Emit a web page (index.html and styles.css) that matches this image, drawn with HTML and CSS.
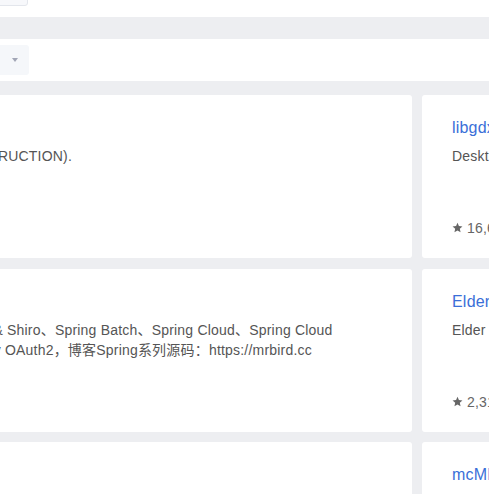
FILE: index.html
```html
<!DOCTYPE html>
<html lang="zh-CN">
<head>
<meta charset="utf-8">
<title>Trending</title>
<link rel="stylesheet" href="styles.css">
</head>
<body>
<div class="page">
  <header class="top">
    <div class="search"></div>
  </header>
  <div class="band"></div>
  <div class="filters">
    <div class="select"><span class="caret"></span></div>
  </div>
  <main class="content">
    <div class="grid">
      <article class="card">
        <a class="title">java-guide</a>
        <p class="desc">A path to learning Java 8 (UNDER CONSTRUCTION).</p>
        <div class="stars"><svg class="star" viewBox="0 0 24 24"><path d="M12 1.8l3.1 7.1 7.7.7-5.8 5.1 1.7 7.6L12 18.3l-6.7 4 1.7-7.6-5.8-5.1 7.7-.7z"/></svg>4,812</div>
      </article>
      <article class="card">
        <a class="title">libgdx</a>
        <p class="desc">Desktop/Android/HTML5/iOS Java game development framework</p>
        <div class="stars"><svg class="star" viewBox="0 0 24 24"><path d="M12 1.8l3.1 7.1 7.7.7-5.8 5.1 1.7 7.6L12 18.3l-6.7 4 1.7-7.6-5.8-5.1 7.7-.7z"/></svg>16,634</div>
      </article>
      <article class="card">
        <a class="title">SpringAll</a>
        <p class="desc">循序渐进，学习Spring Boot、Spring Boot &amp; Shiro、Spring Batch、Spring Cloud、Spring Cloud Alibaba、Spring Security &amp; Spring Security OAuth2，博客Spring系列源码：https://mrbird.cc</p>
        <div class="stars"><svg class="star" viewBox="0 0 24 24"><path d="M12 1.8l3.1 7.1 7.7.7-5.8 5.1 1.7 7.6L12 18.3l-6.7 4 1.7-7.6-5.8-5.1 7.7-.7z"/></svg>6,102</div>
      </article>
      <article class="card">
        <a class="title">Elder</a>
        <p class="desc">Elder driver Xiao Wang</p>
        <div class="stars"><svg class="star" viewBox="0 0 24 24"><path d="M12 1.8l3.1 7.1 7.7.7-5.8 5.1 1.7 7.6L12 18.3l-6.7 4 1.7-7.6-5.8-5.1 7.7-.7z"/></svg>2,318</div>
      </article>
      <article class="card">
        <a class="title">halo</a>
        <p class="desc">A modern blogging system.</p>
        <div class="stars"><svg class="star" viewBox="0 0 24 24"><path d="M12 1.8l3.1 7.1 7.7.7-5.8 5.1 1.7 7.6L12 18.3l-6.7 4 1.7-7.6-5.8-5.1 7.7-.7z"/></svg>9,544</div>
      </article>
      <article class="card">
        <a class="title">mcMMO</a>
        <p class="desc">The #1 RPG Mod for Minecraft</p>
        <div class="stars"><svg class="star" viewBox="0 0 24 24"><path d="M12 1.8l3.1 7.1 7.7.7-5.8 5.1 1.7 7.6L12 18.3l-6.7 4 1.7-7.6-5.8-5.1 7.7-.7z"/></svg>412</div>
      </article>
    </div>
  </main>
</div>
</body>
</html>
```

FILE: styles.css
```css
html, body {
  margin: 0;
  padding: 0;
  overflow: hidden;
  background: #ffffff;
}

body {
  font-family: "Liberation Sans", Arial, "Noto Sans CJK SC", sans-serif;
  font-size: 14px;
  color: #555;
}

.page {
  width: 489px;
}

.top {
  display: flow-root;
  height: 17px;
  background: #fff;
}

.search {
  box-sizing: border-box;
  width: 200px;
  height: 32px;
  margin-top: -26px;
  margin-left: -172px;
  border: 1px solid #e3e6ec;
  border-radius: 3px;
  background: #f7f8fb;
}

.band {
  height: 22px;
  background: #edeef1;
}

.filters {
  box-sizing: border-box;
  height: 42px;
  padding-top: 6px;
  background: #fff;
}

.select {
  box-sizing: border-box;
  width: 200px;
  height: 30px;
  margin-left: -171px;
  padding-right: 11.5px;
  border-radius: 3px;
  background: #f5f7fa;
  display: flex;
  align-items: center;
  justify-content: flex-end;
}

.caret {
  width: 0;
  height: 0;
  border-top: 4px solid #a2a6b6;
  border-left: 3.5px solid transparent;
  border-right: 3.5px solid transparent;
}

.content {
  background: #edeef1;
  padding: 14px 0 20px;
}

.grid {
  display: grid;
  grid-template-columns: 717px 520px;
  grid-auto-rows: 163px;
  column-gap: 10px;
  row-gap: 10.5px;
  margin-left: -305px;
  width: 1247px;
}

.card {
  box-sizing: border-box;
  background: #fff;
  border-radius: 3px;
  padding: 21px 30px 20px;
  display: flex;
  flex-direction: column;
  letter-spacing: 0.2px;
}

.title {
  font-size: 16px;
  line-height: 24px;
  color: #3a6fd8;
  margin-bottom: 6px;
  white-space: nowrap;
}

.desc {
  margin: 0;
  font-size: 14px;
  line-height: 20px;
  color: #555;
}

.stars {
  margin-top: auto;
  font-size: 14px;
  line-height: 20px;
  color: #666;
  display: flex;
  align-items: center;
}

.star {
  width: 11px;
  height: 11px;
  fill: #666;
  margin-right: 4px;
  margin-top: -1px;
}
```
